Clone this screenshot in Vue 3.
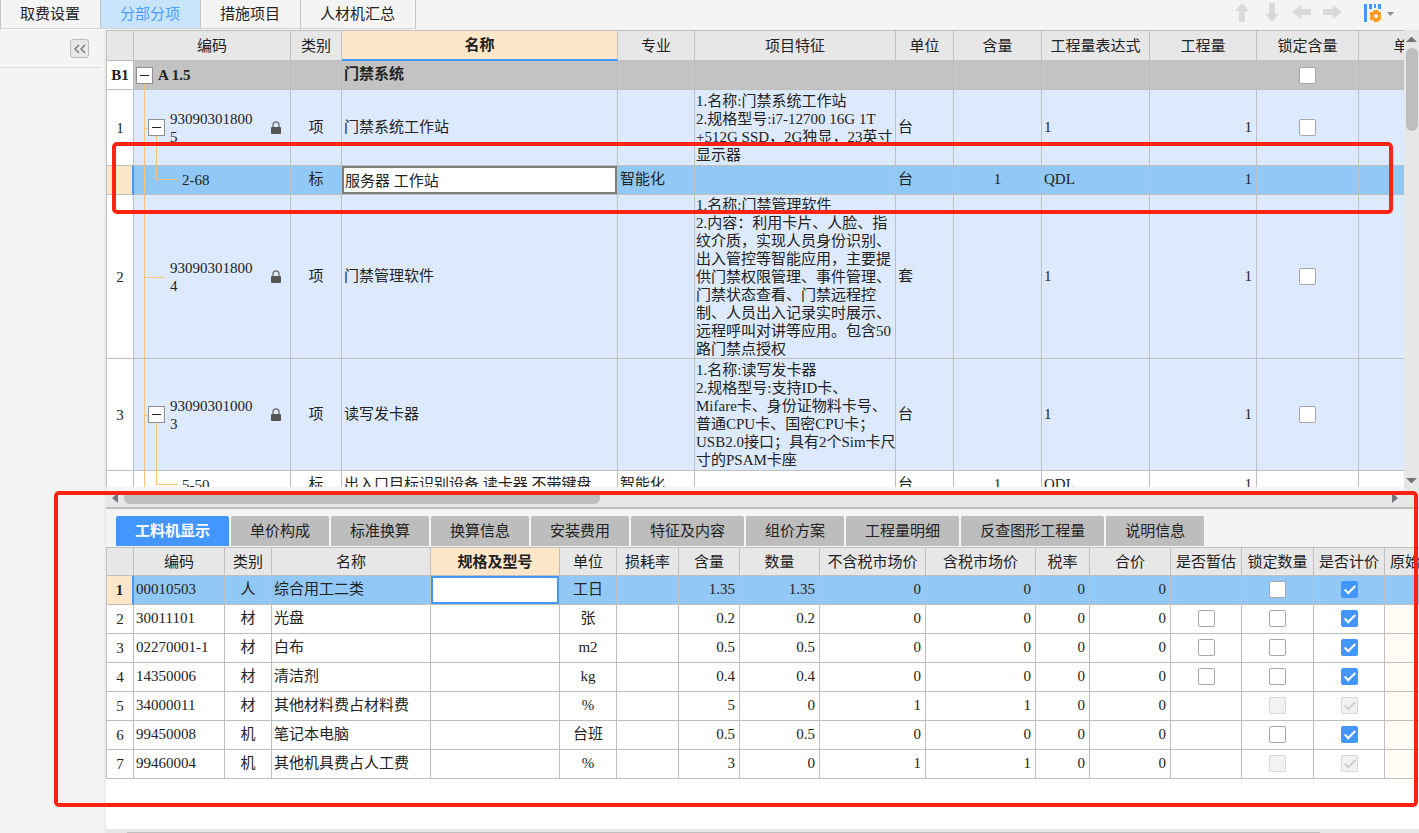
<script setup>
import { ref } from 'vue'

const pages = ['取费设置', '分部分项', '措施项目', '人材机汇总']
const activePage = ref('分部分项')

const itemColumns = [
  { label: '', width: 28 },
  { label: '编码', width: 157 },
  { label: '类别', width: 51 },
  { label: '名称', width: 276, active: true },
  { label: '专业', width: 77 },
  { label: '项目特征', width: 201 },
  { label: '单位', width: 58 },
  { label: '含量', width: 88 },
  { label: '工程量表达式', width: 108 },
  { label: '工程量', width: 107 },
  { label: '锁定含量', width: 102 },
  { label: '单价', width: 100 },
]

const items = ref([
  { no: 'B1', kind: 'group', code: 'A 1.5', name: '门禁系统', open: true, lock: false },
  {
    no: '1', kind: 'item', size: 'h-four', code: '930903018005', type: '项', name: '门禁系统工作站', unit: '台',
    open: true, expr: '1', qty: '1', lock: false,
    feature: '1.名称:门禁系统工作站\n2.规格型号:i7-12700 16G 1T\n+512G SSD，2G独显，23英寸\n显示器',
  },
  { no: '', kind: 'selected', leaf: true, code: '2-68', type: '标', name: '服务器 工作站', major: '智能化', unit: '台', content: '1', expr: 'QDL', qty: '1' },
  {
    no: '2', kind: 'item', size: 'h-nine', code: '930903018004', type: '项', name: '门禁管理软件', unit: '套',
    expr: '1', qty: '1', lock: false,
    feature: '1.名称:门禁管理软件\n2.内容：利用卡片、人脸、指\n纹介质，实现人员身份识别、\n出入管控等智能应用，主要提\n供门禁权限管理、事件管理、\n门禁状态查看、门禁远程控\n制、人员出入记录实时展示、\n远程呼叫对讲等应用。包含50\n路门禁点授权',
  },
  {
    no: '3', kind: 'item', size: 'h-six', code: '930903010003', type: '项', name: '读写发卡器', unit: '台',
    open: true, expr: '1', qty: '1', lock: false,
    feature: '1.名称:读写发卡器\n2.规格型号:支持ID卡、\nMifare卡、身份证物料卡号、\n普通CPU卡、国密CPU卡；\nUSB2.0接口；具有2个Sim卡尺\n寸的PSAM卡座',
  },
  { no: '', kind: 'plain', leaf: true, code: '5-50', type: '标', name: '出入口目标识别设备 读卡器 不带键盘', major: '智能化', unit: '台', content: '1', expr: 'QDL', qty: '1' },
])

const detailTabs = ['工料机显示', '单价构成', '标准换算', '换算信息', '安装费用', '特征及内容', '组价方案', '工程量明细', '反查图形工程量', '说明信息']
const activeDetail = ref('工料机显示')

const detailColumns = [
  { label: '', width: 28 },
  { label: '编码', width: 91 },
  { label: '类别', width: 47 },
  { label: '名称', width: 159 },
  { label: '规格及型号', width: 129, active: true },
  { label: '单位', width: 57 },
  { label: '损耗率', width: 62 },
  { label: '含量', width: 61 },
  { label: '数量', width: 80 },
  { label: '不含税市场价', width: 106 },
  { label: '含税市场价', width: 110 },
  { label: '税率', width: 54 },
  { label: '合价', width: 81 },
  { label: '是否暂估', width: 71 },
  { label: '锁定数量', width: 72 },
  { label: '是否计价', width: 71 },
  { label: '原始', width: 41 },
]

const resources = ref([
  { code: '00010503', type: '人', name: '综合用工二类', unit: '工日', nums: ['1.35', '1.35', '0', '0', '0', '0'], locked: false, priced: true },
  { code: '30011101', type: '材', name: '光盘', unit: '张', nums: ['0.2', '0.2', '0', '0', '0', '0'], estimate: false, locked: false, priced: true },
  { code: '02270001-1', type: '材', name: '白布', unit: 'm2', nums: ['0.5', '0.5', '0', '0', '0', '0'], estimate: false, locked: false, priced: true },
  { code: '14350006', type: '材', name: '清洁剂', unit: 'kg', nums: ['0.4', '0.4', '0', '0', '0', '0'], estimate: false, locked: false, priced: true },
  { code: '34000011', type: '材', name: '其他材料费占材料费', unit: '%', nums: ['5', '0', '1', '1', '0', '0'], locked: false, priced: true, disabled: true },
  { code: '99450008', type: '机', name: '笔记本电脑', unit: '台班', nums: ['0.5', '0.5', '0', '0', '0', '0'], locked: false, priced: true },
  { code: '99460004', type: '机', name: '其他机具费占人工费', unit: '%', nums: ['3', '0', '1', '1', '0', '0'], locked: false, priced: true, disabled: true },
])
const selectedSpec = ref('')

const arrows = [
  { label: '上移', path: 'M10 1L17 9H13V20H7V9H3Z' },
  { label: '下移', path: 'M7 1H13V12H17L10 20L3 12H7Z' },
  { label: '升级', path: 'M0 10L9 3V7H19V13H9V17Z' },
  { label: '降级', path: 'M1 7H11V3L20 10L11 17V13H1Z' },
]
</script>

<template>
  <div class="app">
    <header class="topbar">
      <nav class="pages">
        <button v-for="p in pages" :key="p" type="button" :class="{ on: p === activePage }" @click="activePage = p">{{ p }}</button>
      </nav>
      <div class="tools">
        <button v-for="a in arrows" :key="a.label" type="button" :aria-label="a.label">
          <svg width="20" height="21" viewBox="0 0 20 21"><path :d="a.path" fill="#d9d9d9" /></svg>
        </button>
        <button type="button" class="columns" aria-label="列设置">
          <svg width="30" height="20" viewBox="0 0 30 20">
            <path d="M0 1H3V19H0Z" fill="#4496ff" />
            <path d="M5 1H8V6H5ZM10 1H12V5H10ZM14 1H17V6H14Z" fill="#4496ff" />
            <path d="M10 7H14L15 9H17V12L16 13L17 14V17H15L14 19H10L9 17H6V14L7 13L6 12V9H9Z" fill="#ff9a1f" />
            <circle cx="12" cy="13" r="2" fill="#f4f4f4" />
            <path d="M23 9H30L26.500 13Z" fill="#909090" />
          </svg>
        </button>
      </div>
    </header>

    <div class="body">
      <aside class="side">
        <div class="side-head">
          <button type="button" aria-label="收起">
            <svg width="14" height="12" viewBox="0 0 14 12"><path d="M6 2L2 6L6 10M12 2L8 6L12 10" fill="none" stroke="#777" stroke-width="1.400" /></svg>
          </button>
        </div>
      </aside>

      <main class="main">
        <section class="upper">
          <div class="upper-view">
            <div class="clip">
              <table class="grid">
                <colgroup><col v-for="(c, i) in itemColumns" :key="i" :style="{ width: c.width + 'px' }"></colgroup>
                <thead>
                  <tr><th v-for="(c, i) in itemColumns" :key="i" :class="{ active: c.active }">{{ c.label }}</th></tr>
                </thead>
                <tbody>
                  <tr v-for="(r, i) in items" :key="i" :class="[r.kind, r.size]">
                    <td class="no">{{ r.no }}</td>
                    <td class="code">
                      <template v-if="r.kind !== 'group'">
                        <span class="guide trunk"></span>
                        <span v-if="!r.leaf" class="guide branch" :class="{ long: !r.open }"></span>
                        <span v-if="!r.leaf && r.open" class="guide down"></span>
                        <span v-if="r.leaf" class="guide elbow"></span>
                      </template>
                      <span v-else class="guide root"></span>
                      <div class="code-row" :class="{ leaf: r.leaf, top: r.kind === 'group' }">
                        <button v-if="r.open" type="button" class="fold" aria-label="折叠"></button>
                        <span v-else-if="!r.leaf" class="fold-space"></span>
                        <span class="code-text">{{ r.code }}</span>
                        <svg v-if="r.kind === 'item'" class="lock" width="12" height="14" viewBox="0 0 12 14">
                          <path d="M3 7V4A3 3 0 0 1 9 4V7" fill="none" stroke="#777" stroke-width="1.400" />
                          <rect x="1" y="6" width="10" height="7" rx="1" fill="#555" />
                        </svg>
                      </div>
                    </td>
                    <td class="mid">{{ r.type }}</td>
                    <td class="name" :class="{ edit: r.kind === 'selected' }">
                      <input v-if="r.kind === 'selected'" v-model="r.name" type="text" aria-label="名称">
                      <template v-else>{{ r.name }}</template>
                    </td>
                    <td>{{ r.major }}</td>
                    <td class="feature">{{ r.feature }}</td>
                    <td>{{ r.unit }}</td>
                    <td class="mid">{{ r.content }}</td>
                    <td>{{ r.expr }}</td>
                    <td class="num">{{ r.qty }}</td>
                    <td class="mid check"><input v-if="r.lock !== undefined" v-model="r.lock" type="checkbox" aria-label="锁定含量"></td>
                    <td></td>
                  </tr>
                </tbody>
              </table>
            </div>
            <div class="vbar">
              <svg width="11" height="5" viewBox="0 0 11 5"><path d="M0 5L5 0H6L11 5Z" fill="#737780" /></svg>
              <div class="vthumb"></div>
              <svg class="end" width="11" height="5" viewBox="0 0 11 5"><path d="M0 0H11L6 5H5Z" fill="#737780" /></svg>
            </div>
          </div>
          <div class="hbar">
            <svg width="6" height="10" viewBox="0 0 6 10"><path d="M6 0V10L0 5Z" fill="#737780" /></svg>
            <div class="hthumb"></div>
            <svg class="end" width="6" height="10" viewBox="0 0 6 10"><path d="M0 0V10L6 5Z" fill="#737780" /></svg>
          </div>
        </section>

        <section class="lower">
          <nav class="details">
            <button v-for="t in detailTabs" :key="t" type="button" :class="{ on: t === activeDetail }" @click="activeDetail = t">{{ t }}</button>
          </nav>
          <div class="lower-view">
            <table class="grid small">
              <colgroup><col v-for="(c, i) in detailColumns" :key="i" :style="{ width: c.width + 'px' }"></colgroup>
              <thead>
                <tr><th v-for="(c, i) in detailColumns" :key="i" :class="{ active: c.active }">{{ c.label }}</th></tr>
              </thead>
              <tbody>
                <tr v-for="(r, i) in resources" :key="r.code" :class="i === 0 ? 'selected' : 'plain'">
                  <td class="no">{{ i + 1 }}</td>
                  <td>{{ r.code }}</td>
                  <td class="mid">{{ r.type }}</td>
                  <td>{{ r.name }}</td>
                  <td :class="{ focus: i === 0 }"><input v-if="i === 0" v-model="selectedSpec" type="text" aria-label="规格及型号"></td>
                  <td class="mid">{{ r.unit }}</td>
                  <td></td>
                  <td v-for="(n, k) in r.nums" :key="k" class="num">{{ n }}</td>
                  <td class="mid check"><input v-if="r.estimate !== undefined" v-model="r.estimate" type="checkbox" aria-label="是否暂估"></td>
                  <td class="mid check"><input v-model="r.locked" type="checkbox" :disabled="r.disabled" aria-label="锁定数量"></td>
                  <td class="mid check"><input v-model="r.priced" type="checkbox" :disabled="r.disabled" aria-label="是否计价"></td>
                  <td class="origin"></td>
                </tr>
              </tbody>
            </table>
          </div>
          <div class="foot-bar"><div></div></div>
        </section>
      </main>
    </div>

    <div class="mark mark-row"></div>
    <div class="mark mark-detail"></div>
  </div>
</template>

<style>
body {
  margin: 0;
  overflow: hidden;
}
</style>

<style scoped>
.app {
  position: relative;
  display: flex;
  flex-direction: column;
  height: 100vh;
  overflow: hidden;
  background: #f4f4f4;
  color: #222;
  font: 15px/18px "Liberation Serif", "Noto Sans CJK SC", sans-serif;
}
.app *,
.app *::before,
.app *::after {
  box-sizing: border-box;
}
button,
input {
  margin: 0;
  padding: 0;
  border: 0;
  font: inherit;
  color: inherit;
  background: none;
}
svg {
  display: block;
}

.topbar {
  display: flex;
  justify-content: space-between;
  flex: 0 0 30px;
}
.pages {
  display: flex;
  height: 29px;
  border-left: 1px solid #c6c6c6;
}
.pages button {
  padding: 0 20px 0 19px;
  border-right: 1px solid #c6c6c6;
  border-bottom: 1px solid #d4d4d4;
}
.pages .on {
  background: #c9e5fe;
  color: #4c9cff;
}
.tools {
  display: flex;
  align-items: center;
  gap: 10px;
  height: 25px;
  padding-right: 25px;
}
.tools .columns {
  margin-left: 12px;
}

.body {
  display: flex;
  flex: 1;
  min-height: 0;
}
.side {
  flex: 0 0 106px;
  border-right: 2px solid #ebebeb;
}
.side-head {
  display: flex;
  justify-content: flex-end;
  align-items: center;
  width: 101px;
  height: 38px;
  padding-right: 12px;
  border-bottom: 1px solid #dedede;
}
.side-head button {
  display: grid;
  place-items: center;
  width: 19px;
  height: 19px;
  border: 1px solid #bcbcbc;
  border-radius: 3px;
  background: #e8e8e8;
}

.main {
  display: flex;
  flex-direction: column;
  flex: 1;
  min-width: 0;
}
.upper {
  display: flex;
  flex-direction: column;
  flex: 1;
  min-height: 0;
  border-bottom: 2px solid #bebebe;
}
.upper-view {
  display: flex;
  flex: 1;
  min-height: 0;
}
.clip {
  flex: 1;
  min-width: 0;
  margin-bottom: 4px;
  overflow: hidden;
  background: #fff;
}

.grid {
  width: 0;
  table-layout: fixed;
  border-collapse: separate;
  border-spacing: 0;
  white-space: nowrap;
}
.grid th,
.grid td {
  height: 29px;
  padding: 0 2px;
  border-right: 1px solid #bfbfbf;
  border-bottom: 1px solid #bfbfbf;
  overflow: hidden;
  text-align: left;
  vertical-align: middle;
}
.grid td {
  padding-bottom: 2px;
}
.grid th {
  height: 31px;
  border-top: 1px solid #bfbfbf;
  background: #e7e7e7;
  font-weight: 400;
  text-align: center;
}
.grid th:first-child,
.grid td:first-child {
  border-left: 1px solid #bfbfbf;
}
.grid th.active {
  background: #fee6c8;
  font-weight: 700;
}
.upper .grid th.active {
  border-bottom: 2px solid #4496ff;
}
.grid .no {
  padding: 0;
  background: #fff;
  text-align: center;
}
.grid .mid {
  text-align: center;
}
.upper .check {
  padding-bottom: 0;
}
.grid .num {
  padding-right: 4px;
  text-align: right;
}
.grid .feature {
  padding: 0 1px;
  white-space: pre;
}
.group td {
  background: #c3c3c3;
  font-weight: 700;
}
.item td {
  background: #ddeafe;
}
.plain td {
  background: #fff;
}
.selected td {
  background: #92c8f6;
}
.selected .no {
  border-right: 2px solid #4496ff;
  background: #fee6c8;
  font-weight: 700;
}
.grid .h-four td {
  height: 76px;
}
.grid .h-nine td {
  height: 164px;
}
.grid .h-six td {
  height: 112px;
}

.grid .code {
  position: relative;
  padding: 0;
}
.code-row {
  position: relative;
  display: flex;
  align-items: center;
  gap: 5px;
  padding: 0 8px 0 14px;
}
.code-row.top {
  padding-left: 2px;
}
.code-row.leaf {
  padding-left: 48px;
}
.code-text {
  flex: 1;
  min-width: 0;
}
.item .code-text {
  flex: 0 0 84px;
  white-space: normal;
  word-break: break-all;
}
.lock {
  margin-left: auto;
}
.fold {
  position: relative;
  flex: none;
  width: 17px;
  height: 17px;
  border: 1px solid #8f8f8f;
  background: #fff;
}
.fold::after {
  content: "";
  position: absolute;
  top: 7px;
  left: 3px;
  width: 9px;
  height: 1px;
  background: #222;
}
.fold-space {
  flex: 0 0 17px;
}
.guide {
  position: absolute;
  border: 0 solid #fbc27a;
}
.trunk {
  top: 0;
  bottom: -1px;
  left: 10px;
  border-left-width: 1px;
}
.root {
  top: 50%;
  bottom: -1px;
  left: 10px;
  border-left-width: 1px;
}
.branch {
  top: 50%;
  left: 10px;
  width: 5px;
  border-top-width: 1px;
}
.branch.long {
  width: 21px;
}
.down {
  top: 50%;
  bottom: -1px;
  left: 22px;
  border-left-width: 1px;
}
.elbow {
  top: 0;
  left: 22px;
  width: 22px;
  height: 50%;
  border-left-width: 1px;
  border-bottom-width: 1px;
}

.grid .edit,
.grid .focus {
  padding: 0;
}
.grid input[type="text"] {
  display: block;
  width: 100%;
  height: 28px;
  padding: 0 1px 2px;
  border: 2px solid #7d7d7d;
  background: #fff;
  outline: 0;
}
.grid .focus input[type="text"] {
  border-color: #4496ff;
}
input[type="checkbox"] {
  position: relative;
  display: block;
  width: 17px;
  height: 17px;
  margin: 0 auto;
  border: 1px solid #a6a6a6;
  border-radius: 2px;
  background: #fff;
  appearance: none;
}
input[type="checkbox"]:checked {
  border-color: #4496ff;
  background: #4496ff;
}
input[type="checkbox"]:checked::after {
  content: "";
  position: absolute;
  top: 1px;
  left: 5px;
  width: 6px;
  height: 11px;
  border: solid #fff;
  border-width: 0 2px 2px 0;
  transform: rotate(45deg);
}
input[type="checkbox"]:disabled {
  border-color: #d8d8d8;
  background: #f2f2f2;
}
input[type="checkbox"]:disabled::after {
  border-color: #cfcfcf;
}

.vbar {
  display: flex;
  flex-direction: column;
  align-items: center;
  flex: 0 0 15px;
  padding: 7px 0 8px;
  background: #e7e7e7;
}
.vthumb {
  width: 12px;
  height: 83px;
  margin-top: 6px;
  border-radius: 6px;
  background: #bebebe;
}
.vbar .end {
  margin-top: auto;
}
.hbar {
  display: flex;
  align-items: center;
  flex: 0 0 16px;
  padding: 0 21px 2px 6px;
  background: #e7e7e7;
}
.hthumb {
  width: 37%;
  height: 12px;
  margin-left: 6px;
  border-radius: 6px;
  background: #bebebe;
}
.hbar .end {
  margin-left: auto;
}

.lower {
  display: flex;
  flex-direction: column;
  flex: 0 0 324px;
}
.details {
  display: flex;
  gap: 2px;
  padding: 7px 10px 1px;
}
.details button {
  height: 30px;
  padding: 0 19px;
  border-radius: 2px 2px 0 0;
  background: #bdbdbd;
}
.details .on {
  background: #4496ff;
  color: #fff;
  font-weight: 700;
}
.lower-view {
  flex: 1;
  min-height: 0;
  overflow: hidden;
  background: #fff;
}
.small th {
  height: 29px;
}
.grid .origin {
  background: #fffbf5;
}
.grid .selected .origin {
  background: #92c8f6;
}
.foot-bar {
  flex: 0 0 4px;
  padding: 3px 99px 0 21px;
  background: #e7e7e7;
}
.foot-bar div {
  height: 1px;
  background: #bebebe;
}

.mark {
  position: absolute;
  border: 4px solid #ff2314;
  border-radius: 5px;
  pointer-events: none;
}
.mark-row {
  top: 142px;
  right: 26px;
  left: 112px;
  height: 72px;
}
.mark-detail {
  right: 1px;
  bottom: 26px;
  left: 54px;
  height: 316px;
}
</style>
